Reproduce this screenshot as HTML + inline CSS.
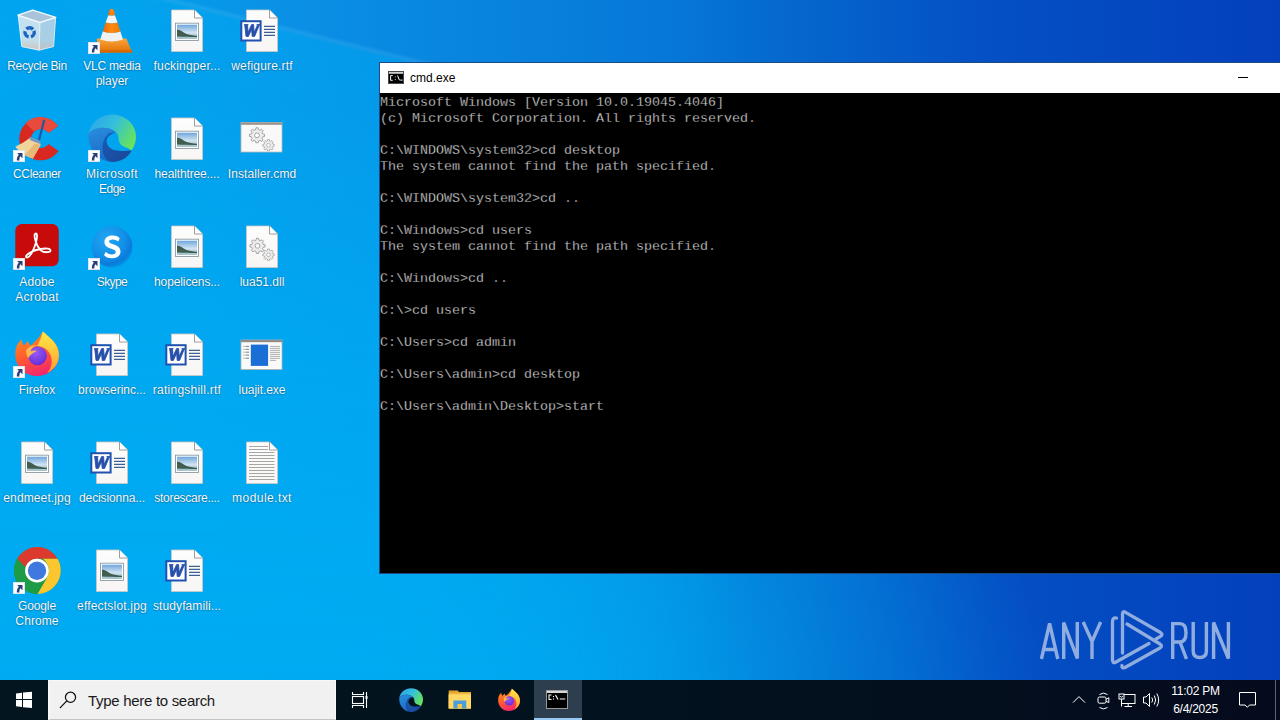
<!DOCTYPE html>
<html><head><meta charset="utf-8">
<style>

*{margin:0;padding:0;box-sizing:border-box}
html,body{width:1280px;height:720px;overflow:hidden}
body{position:relative;font-family:"Liberation Sans",sans-serif;
background:
linear-gradient(194deg,rgba(255,255,255,0) 26.25%,rgba(170,235,255,.13) 26.66%,rgba(255,255,255,0) 27.1%),
radial-gradient(ellipse 900px 660px at 160px 760px,rgba(0,176,244,1) 0%,rgba(0,172,242,.95) 35%,rgba(0,165,240,0) 100%),
linear-gradient(90deg,#02a0ee 0%,#069ae9 15%,#0a90e6 23%,#0882dd 40%,#0678d8 52%,#0564cc 64%,#0450c4 77%,#0440bc 100%);}
.gi{position:absolute;overflow:visible}
.lb{position:absolute;width:75px;text-align:center;color:#fff;font-size:12px;line-height:15px;-webkit-text-stroke:.12px rgba(0,60,120,.5);text-shadow:0 0 2px rgba(0,0,0,.3),0 1px 1px rgba(0,0,0,.15)}
#win{position:absolute;left:379px;top:62px;width:902px;height:512px;background:#000;border:1px solid #1d4a80;border-right:0}
#title{position:absolute;left:0;top:0;right:0;height:30px;background:#fff}
#title .tt{position:absolute;left:30px;top:8px;font-size:12px;color:#000}
#con{position:absolute;left:0;top:32px;font-family:"Liberation Mono",monospace;font-size:13.333px;line-height:16px;color:#e4e4e4;white-space:pre;-webkit-text-stroke:.3px #000}
#tb{position:absolute;left:0;top:680px;width:1280px;height:40px;background:linear-gradient(90deg,#03151f,#02121e 50%,#050b1d)}
#cmdhl{position:absolute;left:534px;top:0;width:48px;height:40px;background:#2d3e4e;border-bottom:2px solid #99c9f2}
#search{position:absolute;left:48px;top:0;width:288px;height:40px;background:#f1f1f1;border:1px solid #f8f8fa;border-left:2px solid #f7f7f7;border-bottom:1px solid #c4c4c4}
#search .st{position:absolute;left:38px;top:10.5px;font-size:15px;letter-spacing:-0.3px;color:#1a1a1a}
#clk{position:absolute;left:1160px;top:2px;width:71px;text-align:center;color:#fff;font-size:12px;letter-spacing:-.25px;line-height:18px}
#ov{position:absolute;left:0;top:0;width:1280px;height:680px;-webkit-mask-image:linear-gradient(194deg,transparent 27.5%,#000 28.2%);mask-image:linear-gradient(194deg,transparent 27.5%,#000 28.2%)}
#ov2{position:absolute;left:0;top:0;width:1280px;height:680px;-webkit-mask-image:linear-gradient(90deg,#000 380px,transparent 760px);mask-image:linear-gradient(90deg,#000 380px,transparent 760px);background:linear-gradient(180deg,rgba(0,170,242,.45) 0,rgba(0,170,242,.68) 400px,rgba(0,170,242,.75) 680px)}
</style></head><body>
<svg width="0" height="0" style="position:absolute">
<defs>
 <linearGradient id="gPage" x1="0" y1="0" x2="0" y2="1"><stop offset="0" stop-color="#fdfdfd"/><stop offset="1" stop-color="#f7f6f4"/></linearGradient>
 <linearGradient id="gSky" x1="0" y1="0" x2="0" y2="1"><stop offset="0" stop-color="#6fa6dc"/><stop offset=".55" stop-color="#cfe3f2"/><stop offset="1" stop-color="#8fb2c4"/></linearGradient>
 <linearGradient id="gVlc" x1="0" y1="0" x2="1" y2="0"><stop offset="0" stop-color="#e86a00"/><stop offset=".5" stop-color="#ff8a12"/><stop offset="1" stop-color="#f07800"/></linearGradient>
 <linearGradient id="gVlcB" x1="0" y1="0" x2="0" y2="1"><stop offset="0" stop-color="#f9a640"/><stop offset="1" stop-color="#e07000"/></linearGradient>
 <linearGradient id="gEdgeTop" x1="0" y1=".2" x2="1" y2=".7"><stop offset="0" stop-color="#2aa6ea"/><stop offset=".45" stop-color="#35bfdc"/><stop offset=".8" stop-color="#55d882"/><stop offset="1" stop-color="#6ae45a"/></linearGradient>
 <linearGradient id="gEdgeL" x1="0" y1="0" x2=".3" y2="1"><stop offset="0" stop-color="#2a8ede"/><stop offset="1" stop-color="#1a6cc8"/></linearGradient>
 <linearGradient id="gEdgeW" x1="0" y1="0" x2="1" y2="1"><stop offset="0" stop-color="#1a5cb4"/><stop offset="1" stop-color="#1a4598"/></linearGradient>
 <radialGradient id="gSky2" cx=".38" cy=".32" r=".72"><stop offset="0" stop-color="#22a6f2"/><stop offset=".6" stop-color="#1290e8"/><stop offset=".85" stop-color="#0b7adc"/><stop offset="1" stop-color="#0a78d8" stop-opacity=".3"/></radialGradient>
 <linearGradient id="gFfRing" x1=".2" y1=".1" x2=".5" y2="1"><stop offset="0" stop-color="#ff8a1e"/><stop offset=".5" stop-color="#ff5a30"/><stop offset="1" stop-color="#f5256e"/></linearGradient>
 <linearGradient id="gFfY" x1="0" y1="0" x2="0" y2="1"><stop offset="0" stop-color="#fff04a"/><stop offset="1" stop-color="#ffa22a"/></linearGradient>
 <radialGradient id="gFfP" cx=".4" cy=".3" r=".7"><stop offset="0" stop-color="#9a5cf5"/><stop offset="1" stop-color="#6a2ed8"/></radialGradient>
 <linearGradient id="gRb" x1="0" y1="0" x2="0" y2="1"><stop offset="0" stop-color="#dfeaf3"/><stop offset=".7" stop-color="#dce6ee"/><stop offset="1" stop-color="#ecc8b4"/></linearGradient>
 <linearGradient id="gRb2" x1="0" y1="0" x2="0" y2="1"><stop offset="0" stop-color="#c2d6e6"/><stop offset=".7" stop-color="#c8d6e2"/><stop offset="1" stop-color="#e4c6b6"/></linearGradient>

 <symbol id="sc" viewBox="0 0 12 12"><rect x=".5" y=".5" width="11" height="11" fill="#fafcff" stroke="#dde6ee"/><path d="M3.9 10.5C3.7 8 4.4 6 5.9 4.7L4.2 2.9H9.5V8.2L7.5 6.3C6.5 7.3 6.2 8.9 6.4 10.5Z" fill="#2a3f78"/></symbol>

 <symbol id="page" viewBox="0 0 48 48"><path d="M8.5 4H31.5L39.5 12V45.5H8.5Z" fill="url(#gPage)" stroke="#cfc8c0" stroke-width=".8"/><path d="M31.5 4V12H39.5" fill="#fff" stroke="#8a8580" stroke-width=".8"/></symbol>

 <symbol id="img" viewBox="0 0 48 48"><use href="#page"/><rect x="12.5" y="17.2" width="23" height="17.3" fill="#fff" stroke="#8c9aa2" stroke-width=".9"/><rect x="14" y="18.7" width="20" height="14.3" fill="url(#gSky)"/><path d="M14 23.5C17 23.8 20 26 23 27.8 26 29 30 29.5 34 29.7V33H14Z" fill="#3f5e4e"/><path d="M14 30.5C20 31 27 30.8 34 31V33H14Z" fill="#a8c4cf"/></symbol>

 <symbol id="doc" viewBox="0 0 48 48"><use href="#page"/><path d="M26 20.4H37M26 23.4H37M26 26.4H37M26 29.4H37" stroke="#3d5f95" stroke-width="1.1"/><rect x="3.3" y="15.2" width="19.3" height="19.3" fill="#fff" stroke="#2151b0" stroke-width="2"/><path d="M6 18.6H10.2L9.6 19.2 10 26.6 13.6 18.6H15.6L16.2 26.6 19.4 19.2 18.8 18.6H22L21.2 19.3 16.6 30.4H14.2L13.6 23.2 10.4 30.4H8L6.8 19.3Z" fill="#2850aa" stroke="#2850aa" stroke-width=".9" stroke-linejoin="round"/></symbol>

 <symbol id="gear" viewBox="-10 -10 20 20"><path d="M-1.3-8.5H1.3L1.7-6.3 3.6-5.5 5.4-6.8 7.2-5 5.9-3.2 6.7-1.3 8.9-.9V1.7L6.7 2.1 5.9 4 7.2 5.8 5.4 7.6 3.6 6.3 1.7 7.1 1.3 9.3H-1.3L-1.7 7.1-3.6 6.3-5.4 7.6-7.2 5.8-5.9 4-6.7 2.1-8.9 1.7V-.9L-6.7-1.3-5.9-3.2-7.2-5-5.4-6.8-3.6-5.5-1.7-6.3Z" fill="#ececec" stroke="#8e8e8e" stroke-width=".9"/><circle cx="0" cy=".4" r="2.8" fill="#fff" stroke="#8e8e8e" stroke-width=".9"/></symbol>

 <symbol id="dll" viewBox="0 0 48 48"><use href="#page"/><use href="#gear" x="11" y="15" width="17" height="17"/><use href="#gear" x="24" y="26" width="13" height="13"/></symbol>

 <symbol id="txt" viewBox="0 0 48 48"><use href="#page"/><path d="M11 8.5H30M11 11.5H30M11 14.5H36.5M11 17.5H36.5M11 20.5H36.5M11 23.5H36.5M11 26.5H36.5M11 29.5H36.5M11 32.5H36.5M11 35.5H36.5M11 38.5H36.5M11 41.5H36.5" stroke="#9c9c9c" stroke-width=".9"/></symbol>

 <symbol id="cmdg" viewBox="0 0 48 48"><rect x="3" y="8.6" width="41" height="29.4" fill="#f9f9f9" stroke="#b8b8b8" stroke-width=".8"/><rect x="3" y="8.6" width="41" height="2.2" fill="#9d9288"/><use href="#gear" x="10.5" y="12.5" width="17" height="17"/><use href="#gear" x="24" y="24.5" width="13" height="13"/></symbol>

 <symbol id="exe" viewBox="0 0 48 48"><rect x="3" y="10" width="41" height="29.5" fill="#fafafa" stroke="#b4b4b4" stroke-width=".8"/><rect x="3" y="10" width="41" height="2.2" fill="#948c86"/><rect x="12.8" y="14.6" width="17.3" height="21.3" fill="#1a6fd6"/><path d="M5.5 16.4H11M5.5 19.3H11M5.5 22.2H11M5.5 25.1H11M5.5 28.2H11" stroke="#707070" stroke-width=".9" stroke-dasharray="1 1 4"/><path d="M32 16.4H42M32 18.4H42M32 20.4H42M32 22.4H42M32 24.4H42M32 26.4H42M32 28.4H42M32 30.4H38" stroke="#9a9a9a" stroke-width=".8"/></symbol>

 <symbol id="recycle" viewBox="0 0 48 48">
  <path d="M5.2 9.6 26.9 16.6 26.2 44.2 8.8 40.6Z" fill="url(#gRb)" fill-opacity=".88" stroke="#eaf6ff" stroke-width=".9"/>
  <path d="M26.9 16.6 42.6 11.7 40.6 40.6 26.2 44.2Z" fill="url(#gRb2)" fill-opacity=".85" stroke="#e0eefa" stroke-width=".9"/>
  <path d="M4.9 9.2 19.7 4.1 42.8 11.4 26.9 16.4Z" fill="#a9c4d8" stroke="#f2f9ff" stroke-width="1.3" stroke-linejoin="round"/>
  <circle cx="16.6" cy="26.4" r="4.6" fill="none" stroke="#1d63c2" stroke-width="3.4" stroke-dasharray="7.2 2.4" transform="rotate(-20 16.6 26.4)"/>
 </symbol>

 <symbol id="vlc" viewBox="0 0 48 48">
  <path d="M8.8 32.5 38.4 32.5 44.2 46.4 9.9 46.4Z" fill="url(#gVlcB)"/>
  <path d="M9.8 44H44L44.2 46.4H9.9Z" fill="#d86800"/>
  <path d="M20.3 9.2Q20.4 3 23.6 2.7 26.8 3 26.9 9.2 23.6 10.3 20.3 9.2Z" fill="url(#gVlc)"/>
  <path d="M20.3 9.2Q23.6 10.3 26.9 9.2L29.6 16.6Q23.6 18.6 17.6 16.6Z" fill="#f3f3f3"/>
  <path d="M17.6 16.6Q23.6 18.6 29.6 16.6L32.4 25.6Q23.6 28.6 14.8 25.6Z" fill="url(#gVlc)"/>
  <path d="M14.8 25.6Q23.6 28.6 32.4 25.6L35 33.6Q23.6 37.6 12.2 33.6Z" fill="#f1f1f1"/>
 </symbol>

 <symbol id="edge" viewBox="0 0 48 48">
  <path d="M0.6 19.9C2 9 12 .5 24 .5 37 .5 48 10 48 22.5 48 28 46 33 43.7 36.5 41 34 38 33.5 35.5 32.5 32 31 30.5 27 30.5 24 30.5 19.5 27 16 21 14.5 13 12.5 4 14.5 0.6 19.9Z" fill="url(#gEdgeTop)"/>
  <path d="M0.6 19.9C4 14.5 13 12.5 21 14.5 24 15.3 26.5 16.8 28 18.8 24 18.2 21 19 19.5 20.5 15.5 25 14 31 14.4 36 14.8 41 17 45 20.5 47.5 9 45.5 .5 35 .5 22.5Z" fill="url(#gEdgeL)"/>
  <path d="M19.5 20.5C21 19 24 18.2 28 18.8 23 19.5 19 22.5 18.7 27 18.5 31 21.5 35 27 36.3 32 37.3 38 37 43.7 36.5 40.5 43 33 48 25 48 23.5 48 22 47.8 20.5 47.5 17 45 14.8 41 14.4 36 14 31 15.5 25 19.5 20.5Z" fill="url(#gEdgeW)"/>
 </symbol>

 <symbol id="ff" viewBox="0 0 48 48">
  <path d="M24 46C11.5 46 2.3 36.5 2.3 24.5 2.3 18 4.5 12.5 8.8 9.6 8.6 12 9.5 14 11 15.5 12.5 13.5 14 12 15.3 11 15.6 13 16.6 14.5 18 15.5 21 12 25 10 29.8 1.6 36 7 46 14 46 25 46 37 36 46 24 46Z" fill="url(#gFfRing)"/>
  <path d="M29.8 1.6C36 7 46 14 46 25 46 33 41 40 34 43 39 38 40 30 37 24 34 18 28 16 24 16 27 11 29 6 29.8 1.6Z" fill="url(#gFfY)" opacity=".95"/>
  <circle cx="24.5" cy="25.8" r="9.4" fill="url(#gFfP)"/>
  <path d="M13 21C15 17 19 15 24 15 20 16.5 18 19 17.5 21.5 20 20 22 20.2 24 21 21 22 18 24 15.2 28 14 26 13 23.5 13 21Z" fill="#ffb84a"/>
 </symbol>

 <symbol id="chrome" viewBox="0 0 48 48">
  <circle cx="24.3" cy="24.5" r="23.4" fill="#1e9b47"/>
  <path d="M24.3 1.1C33 1.1 40.5 5.8 44.6 12.8H24.3C18.5 12.8 14 16.5 13 21.5L4.3 12.8C8.4 5.8 15.8 1.1 24.3 1.1Z" fill="#dd3a2f"/>
  <path d="M44.6 12.8C46.6 16.3 47.7 20.3 47.7 24.5 47.7 37.4 37.3 47.9 24.4 47.9L34.5 30.4C35.4 28.6 36 26.6 36 24.5 36 19.8 33 15.2 30 12.8Z" fill="#fcc72e"/>
  <path d="M4.3 12.8 13.5 28.8C15.5 33 19.5 36.2 24.3 36.2 28.5 36.2 32.5 34 34.5 30.4L24.4 47.9C11.5 47.9 1 37.4 1 24.5 1 20.3 2.2 16.3 4.3 12.8Z" fill="#1e9b47"/>
  <circle cx="24" cy="24.7" r="11.9" fill="#fff"/>
  <circle cx="24" cy="24.7" r="9.2" fill="#3f79e0"/>
 </symbol>

 <symbol id="skype" viewBox="0 0 48 48">
  <circle cx="24" cy="24.7" r="20.5" fill="url(#gSky2)"/>
  <path d="M24.5 13.5C28 13.5 30.8 14.6 31.8 16.5L30 19.6C28.8 18.2 26.8 17.4 24.6 17.4 22.4 17.4 21 18.2 21 19.6 21 23 32.5 21.8 32.5 29.6 32.5 34 28.8 36.3 24 36.3 20.2 36.3 17.3 35 16 33L17.9 29.8C19.3 31.5 21.5 32.5 23.9 32.5 26.3 32.5 27.8 31.6 27.8 30 27.8 26.3 16.4 27.5 16.4 20.1 16.4 16.2 19.8 13.5 24.5 13.5Z" fill="#fff"/>
 </symbol>

 <symbol id="acro" viewBox="0 0 48 48">
  <rect x="2.3" y="2" width="43.4" height="42.2" rx="6.5" fill="#c70a0a"/>
  <path d="M23 11.5C21.5 11.5 21.3 13.5 21.8 16 22.8 21 25 25.5 28 28.5 31 31 37 30.5 37.5 28.8 38 26.5 33 26 27.5 27 22 28 17 30 13.8 33 12.5 34.5 13 36 14.5 35.5 17.5 34 21 27 22.8 21 24 17 24.8 11.5 23 11.5Z" fill="none" stroke="#fff" stroke-width="1.8" stroke-linejoin="round"/>
 </symbol>

 <symbol id="ccl" viewBox="0 0 48 48">
  <path d="M45 12A21.5 21.5 0 1 0 45.5 37L35.5 30A9.5 9.5 0 1 1 35.5 19Z" fill="#d9281f"/>
  <path d="M45 12C41 6.5 34.5 3 27.5 3 21.5 3 16.5 5.3 12.5 9L20.8 17.6C22.5 16 24.8 15 27.5 15 30.8 15 33.8 16.6 35.5 19Z" fill="#e84a3c"/>
  <path d="M30.2 5.6 32.3 6.3 26.6 28 24.6 27.4Z" fill="#2553a6"/>
  <path d="M17.2 23.8 26.6 27.3 27.6 31 19.9 44.4C14 43 6.3 38 2.3 32.8 8 30 13 27 17.2 23.8Z" fill="#f0d49a"/>
  <path d="M27.6 31 19.9 44.4C17 43.8 14 42.5 11.5 41L22 29.5Z" fill="#e8b878"/>
  <path d="M16.3 22.6 26.9 26.6 27.9 30.3 17.3 26.2Z" fill="#6f97c8"/>
 </symbol>
</defs></svg>
<div id="ov"><div id="ov2"></div></div>
<svg class="gi" style="left:13px;top:6.0px" width="48" height="48"><use href="#recycle"/></svg>
<div class="lb" style="left:-0.5px;top:58.7px"><span style="letter-spacing:-0.36px">Recycle Bin</span></div>
<svg class="gi" style="left:88px;top:6.0px" width="48" height="48"><use href="#vlc"/></svg>
<svg class="gi" style="left:88px;top:42.0px" width="12" height="12"><use href="#sc"/></svg>
<div class="lb" style="left:74.5px;top:58.7px"><span style="letter-spacing:-0.23px">VLC media</span><br><span style="letter-spacing:0.00px">player</span></div>
<svg class="gi" style="left:163px;top:6.0px" width="48" height="48"><use href="#img"/></svg>
<div class="lb" style="left:149.5px;top:58.7px"><span style="letter-spacing:0.16px">fuckingper...</span></div>
<svg class="gi" style="left:238px;top:6.0px" width="48" height="48"><use href="#doc"/></svg>
<div class="lb" style="left:224.5px;top:58.7px"><span style="letter-spacing:0.18px">wefigure.rtf</span></div>
<svg class="gi" style="left:13px;top:114.0px" width="48" height="48"><use href="#ccl"/></svg>
<svg class="gi" style="left:13px;top:150.1px" width="12" height="12"><use href="#sc"/></svg>
<div class="lb" style="left:-0.5px;top:166.8px"><span style="letter-spacing:-0.33px">CCleaner</span></div>
<svg class="gi" style="left:88px;top:114.0px" width="48" height="48"><use href="#edge"/></svg>
<svg class="gi" style="left:88px;top:150.1px" width="12" height="12"><use href="#sc"/></svg>
<div class="lb" style="left:74.5px;top:166.8px"><span style="letter-spacing:0.38px">Microsoft</span><br><span style="letter-spacing:-0.51px">Edge</span></div>
<svg class="gi" style="left:163px;top:114.0px" width="48" height="48"><use href="#img"/></svg>
<div class="lb" style="left:149.5px;top:166.8px"><span style="letter-spacing:-0.13px">healthtree....</span></div>
<svg class="gi" style="left:238px;top:114.0px" width="48" height="48"><use href="#cmdg"/></svg>
<div class="lb" style="left:224.5px;top:166.8px"><span style="letter-spacing:0.09px">Installer.cmd</span></div>
<svg class="gi" style="left:13px;top:222.1px" width="48" height="48"><use href="#acro"/></svg>
<svg class="gi" style="left:13px;top:258.1px" width="12" height="12"><use href="#sc"/></svg>
<div class="lb" style="left:-0.5px;top:274.8px"><span style="letter-spacing:0.12px">Adobe</span><br><span style="letter-spacing:0.34px">Acrobat</span></div>
<svg class="gi" style="left:88px;top:222.1px" width="48" height="48"><use href="#skype"/></svg>
<svg class="gi" style="left:88px;top:258.1px" width="12" height="12"><use href="#sc"/></svg>
<div class="lb" style="left:74.5px;top:274.8px"><span style="letter-spacing:-0.59px">Skype</span></div>
<svg class="gi" style="left:163px;top:222.1px" width="48" height="48"><use href="#img"/></svg>
<div class="lb" style="left:149.5px;top:274.8px"><span style="letter-spacing:-0.11px">hopelicens...</span></div>
<svg class="gi" style="left:238px;top:222.1px" width="48" height="48"><use href="#dll"/></svg>
<div class="lb" style="left:224.5px;top:274.8px"><span style="letter-spacing:-0.01px">lua51.dll</span></div>
<svg class="gi" style="left:13px;top:330.1px" width="48" height="48"><use href="#ff"/></svg>
<svg class="gi" style="left:13px;top:366.1px" width="12" height="12"><use href="#sc"/></svg>
<div class="lb" style="left:-0.5px;top:382.8px"><span style="letter-spacing:-0.05px">Firefox</span></div>
<svg class="gi" style="left:88px;top:330.1px" width="48" height="48"><use href="#doc"/></svg>
<div class="lb" style="left:74.5px;top:382.8px"><span style="letter-spacing:-0.02px">browserinc...</span></div>
<svg class="gi" style="left:163px;top:330.1px" width="48" height="48"><use href="#doc"/></svg>
<div class="lb" style="left:149.5px;top:382.8px"><span style="letter-spacing:0.24px">ratingshill.rtf</span></div>
<svg class="gi" style="left:238px;top:330.1px" width="48" height="48"><use href="#exe"/></svg>
<div class="lb" style="left:224.5px;top:382.8px"><span style="letter-spacing:-0.05px">luajit.exe</span></div>
<svg class="gi" style="left:13px;top:438.2px" width="48" height="48"><use href="#img"/></svg>
<div class="lb" style="left:-0.5px;top:490.9px"><span style="letter-spacing:0.12px">endmeet.jpg</span></div>
<svg class="gi" style="left:88px;top:438.2px" width="48" height="48"><use href="#doc"/></svg>
<div class="lb" style="left:74.5px;top:490.9px"><span style="letter-spacing:-0.11px">decisionna...</span></div>
<svg class="gi" style="left:163px;top:438.2px" width="48" height="48"><use href="#img"/></svg>
<div class="lb" style="left:149.5px;top:490.9px"><span style="letter-spacing:-0.29px">storescare....</span></div>
<svg class="gi" style="left:238px;top:438.2px" width="48" height="48"><use href="#txt"/></svg>
<div class="lb" style="left:224.5px;top:490.9px"><span style="letter-spacing:0.44px">module.txt</span></div>
<svg class="gi" style="left:13px;top:546.2px" width="48" height="48"><use href="#chrome"/></svg>
<svg class="gi" style="left:13px;top:582.2px" width="12" height="12"><use href="#sc"/></svg>
<div class="lb" style="left:-0.5px;top:599.0px"><span style="letter-spacing:-0.14px">Google</span><br><span style="letter-spacing:0.10px">Chrome</span></div>
<svg class="gi" style="left:88px;top:546.2px" width="48" height="48"><use href="#img"/></svg>
<div class="lb" style="left:74.5px;top:599.0px"><span style="letter-spacing:0.20px">effectslot.jpg</span></div>
<svg class="gi" style="left:163px;top:546.2px" width="48" height="48"><use href="#doc"/></svg>
<div class="lb" style="left:149.5px;top:599.0px"><span style="letter-spacing:0.10px">studyfamili...</span></div>
<div id="win">
 <div id="title">
  <svg style="position:absolute;left:8px;top:8px" width="16" height="13" viewBox="0 0 16 13"><rect x=".5" y=".5" width="15" height="12" fill="#000" stroke="#4a4a4a"/><rect x="1" y="1" width="14" height="1.8" fill="#cfcfcf"/><path d="M4.7 4.6H2.6V9.3H4.7M7.4 5.5V6.3M7.4 8.3V9.1M9.5 4.5 11.5 9.3M12.3 9.1H14.5" stroke="#fff" stroke-width="1" fill="none"/></svg>
  <div class="tt">cmd.exe</div>
  <div style="position:absolute;left:858px;top:14px;width:10px;height:1px;background:#000"></div>
 </div>
 <div id="con">Microsoft Windows [Version 10.0.19045.4046]
(c) Microsoft Corporation. All rights reserved.

C:\WINDOWS\system32&gt;cd desktop
The system cannot find the path specified.

C:\WINDOWS\system32&gt;cd ..

C:\Windows&gt;cd users
The system cannot find the path specified.

C:\Windows&gt;cd ..

C:\&gt;cd users

C:\Users&gt;cd admin

C:\Users\admin&gt;cd desktop

C:\Users\admin\Desktop&gt;start</div>
</div>
<div id="tb">
 <svg style="position:absolute;left:0;top:0" width="48" height="40"><path fill="#fff" d="M16 13.6 22 12.8V19H16ZM23 12.6 32 11.8V19H23ZM16 20H22V27L16 26.2ZM23 20H32V28L23 27.2Z"/></svg>
 <div id="search">
  <svg style="position:absolute;left:9px;top:8px" width="20" height="20" viewBox="0 0 20 20"><circle cx="11.5" cy="8.3" r="5.1" fill="none" stroke="#111" stroke-width="1.25"/><path d="M7.8 11.9 1.3 18.6" stroke="#111" stroke-width="1.3" stroke-linecap="round"/></svg>
  <div class="st">Type here to search</div>
 </div>
 <svg style="position:absolute;left:351px;top:11px" width="18" height="18" viewBox="0 0 18 18" fill="none" stroke="#fff" stroke-width="1.1"><path d="M1.5 1V3.5H12.5V1M1.5 17V14.5H12.5V17"/><rect x="1.5" y="5.5" width="11" height="7"/><path d="M15.5 1V17"/><rect x="14.5" y="5" width="2" height="3" fill="#fff" stroke="none"/></svg>
 <svg class="gi" style="left:399px;top:8px" width="24" height="24"><use href="#edge"/></svg>
 <svg style="position:absolute;left:448px;top:10px" width="24" height="20" viewBox="0 0 24 20"><path d="M.7.5H9.6L11 2H23V18.5H.7Z" fill="#e3a52c"/><path d="M.7 3.5H23V18.5H.7Z" fill="#f8cc55"/><path d="M.7 5H23V18.5H.7Z" fill="#ffd865"/><path d="M5.4 10.5H18.3V18.5H14V14.5H9.7V18.5H5.4Z" fill="#4c9edb"/><rect x="9.7" y="14" width="4.3" height="4.5" fill="#f6c64a"/></svg>
 <svg class="gi" style="left:497px;top:7.5px" width="24" height="24"><use href="#ff"/></svg>
 <div id="cmdhl"></div>
 <svg style="position:absolute;left:546px;top:10px" width="22" height="19" viewBox="0 0 22 19"><rect x=".5" y=".5" width="21" height="18" fill="#000" stroke="#9a9a9a"/><rect x="1" y="1" width="20" height="2" fill="#d8d8d8"/><path d="M5.5 5H3V9.5H5.5M7.5 6V7M7.5 8.5V9.5M9.5 5 12 9.5M13.8 9H19.3" stroke="#fff" stroke-width="1.1" fill="none"/></svg>
 <svg style="position:absolute;left:1070px;top:12px" width="100" height="18" viewBox="0 0 100 18" fill="none" stroke="#fff" stroke-width="1">
  <path d="M3 10.6 9 4.6 15 10.6"/>
  <path d="M29.5 2.5Q33.5-.3 37.5 2.5M29.5 15.5Q33.5 18.3 37.5 15.5"/>
  <rect x="28" y="5" width="8" height="6.2" rx="1.4"/><path d="M36 7.2 38.8 5.8V10.6L36 9.2"/>
  <rect x="51.5" y="2.5" width="13.5" height="9"/><path d="M58.2 11.5V14.2M54.5 14.5H62"/>
  <rect x="49" y="2" width="5" height="5" fill="#050c1c"/><path d="M50.2 4 51.5 5.4 52.8 4M51.5 7V14.5"/>
  <path d="M73.5 5H76L79.5 1.5V14.5L76 11H73.5Z"/><path d="M81.8 5.5Q83.5 8 81.8 10.5M84.3 3.5Q87 8 84.3 12.5M86.8 1.5Q90.5 8 86.8 14.5"/>
 </svg>
 <div id="clk">11:02 PM<br>6/4/2025</div>
 <svg style="position:absolute;left:1238px;top:11px" width="19" height="18" viewBox="0 0 19 18"><path d="M1.5 1.5H17.5V14H11.5L9.3 16.3 7 14H1.5Z" fill="none" stroke="#fff" stroke-width="1"/></svg>
 <div style="position:absolute;left:1275px;top:0;width:1px;height:40px;background:#5e6670"></div>
</div>
<svg style="position:absolute;left:0;top:0" width="1280" height="720" fill="none" stroke="#8fadde" stroke-width="3.4">
 <g stroke-linejoin="miter">
 <path d="M1041.4 659 1049.6 623.5 1057.8 659M1044.2 649.5H1055"/>
 <path d="M1063.7 659V622.5L1077.3 658.5V622"/>
 <path d="M1083.2 622 1092 641.5 1100.7 622M1092 641V659"/>
 <path d="M1172.7 659V623.6H1180Q1186 623.6 1186 632.8 1186 642 1180 642H1172.7M1180 642 1186.5 659"/>
 <path d="M1193.2 622V651Q1193.2 657.5 1199.8 657.5 1206.4 657.5 1206.4 651V622"/>
 <path d="M1213.6 659V622.5L1228.4 658.5V622"/>
 </g>
 <g stroke-width="3.3" stroke-linecap="round" stroke-linejoin="round">
 <path d="M1116.5 618Q1112.5 617 1112.5 622V660Q1112.5 664 1116 662L1149 643.5"/>
 <path d="M1122.5 653V614Q1122.5 610.5 1125.5 612.3L1160.5 632.5Q1163.5 634.5 1160.5 636.3L1156 639"/>
 <path d="M1127 624 1160 644Q1163 646 1160 648L1125 667.5Q1121 669 1122 665.5"/>
 </g>
</svg>
</body></html>
